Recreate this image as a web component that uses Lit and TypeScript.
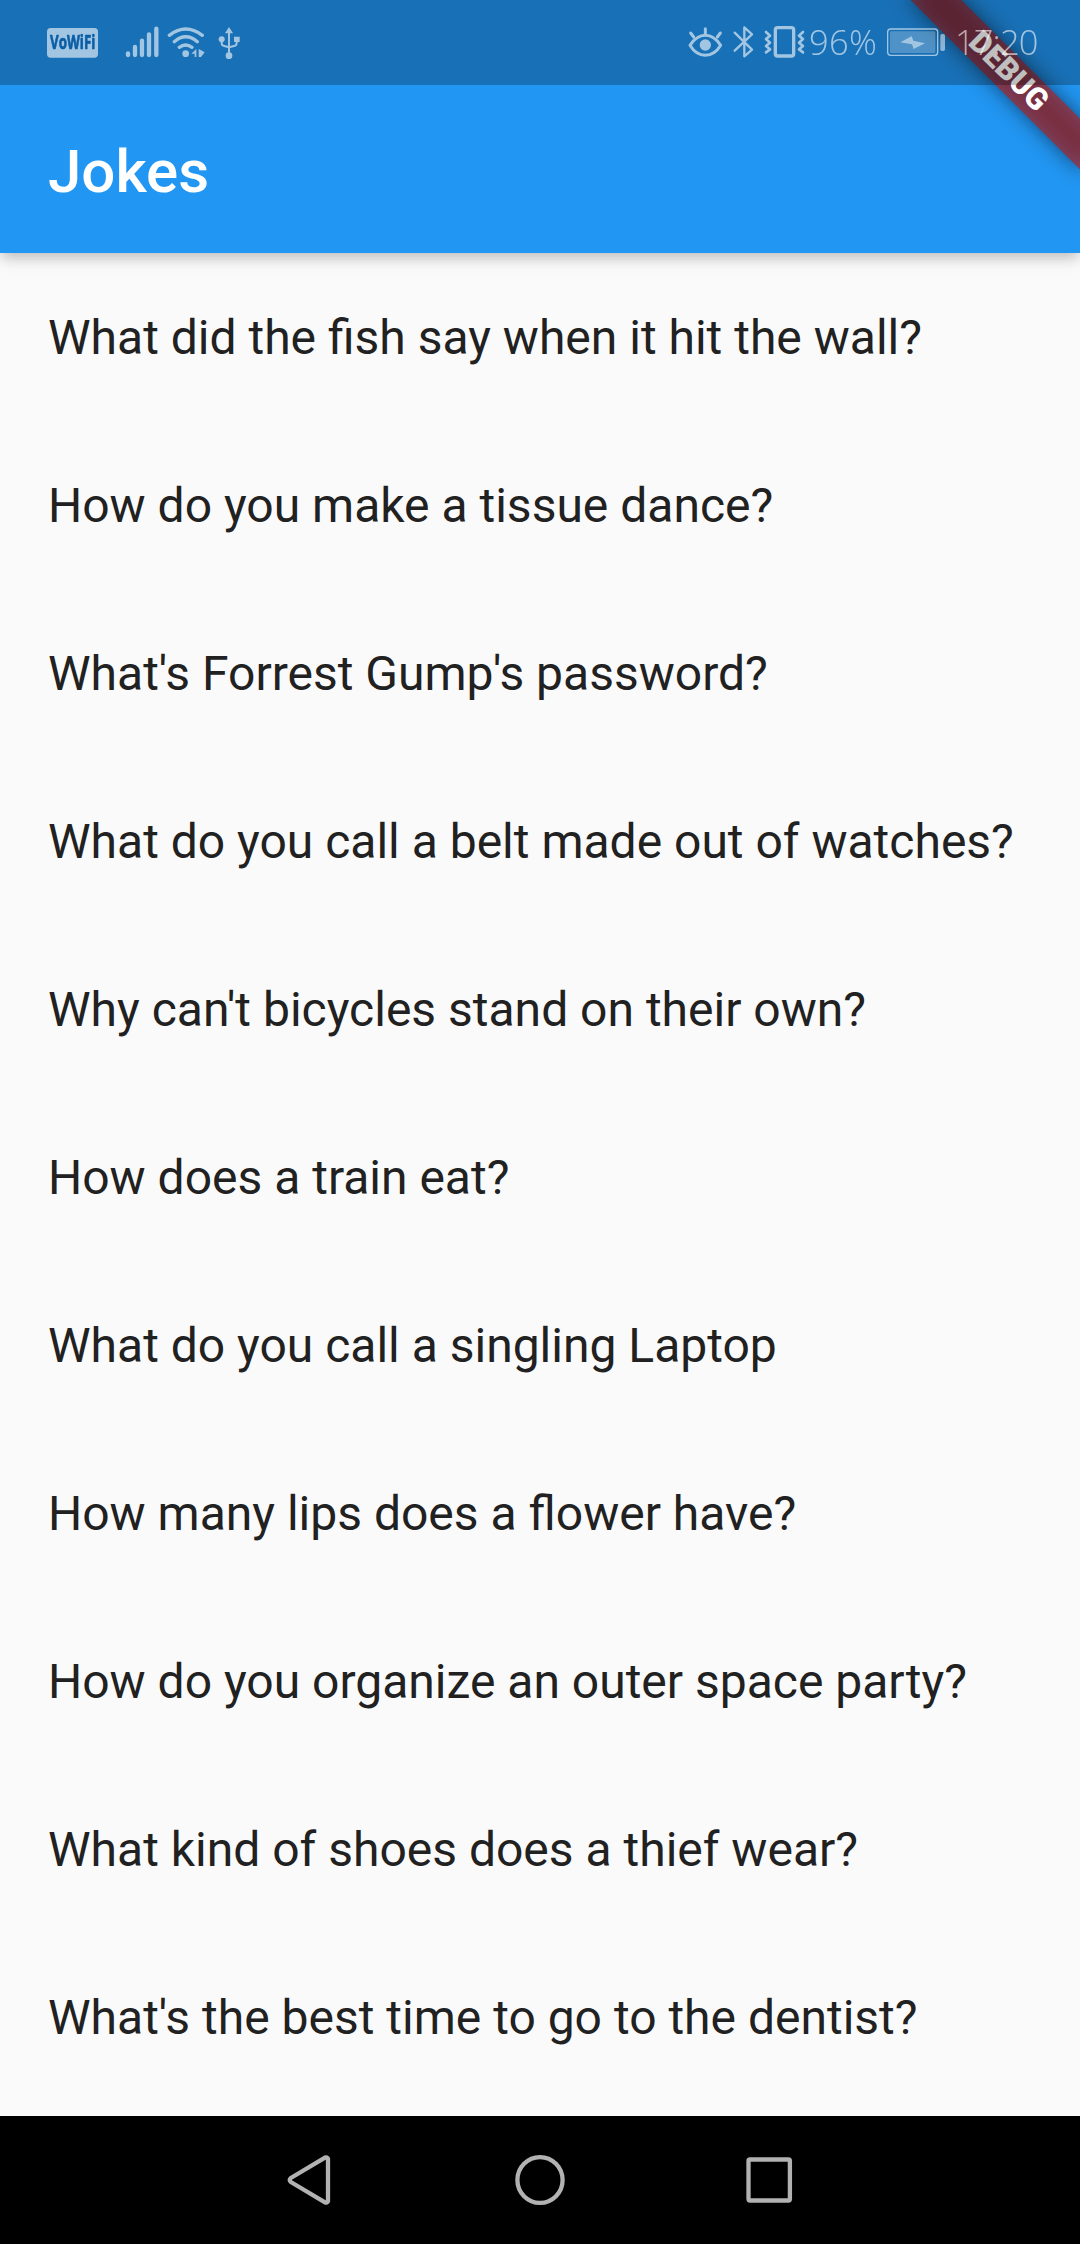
import { LitElement, html, css } from "lit";
import { customElement } from "lit/decorators.js";

@customElement("status-bar")
class StatusBar extends LitElement {
  static styles = css`
    :host {
      display: flex;
      align-items: center;
      justify-content: space-between;
      box-sizing: border-box;
      height: 85px;
      padding: 0 42px 0 47px;
      background: rgba(0, 0, 0, 0.25);
      font: 300 34.5px/83px "Open Sans", sans-serif;
    }
    .group {
      display: flex;
      align-items: center;
      height: 85px;
      opacity: 0.6;
      color: #fff;
    }
    svg {
      display: block;
      height: 37px;
      overflow: visible;
      fill: none;
      stroke: currentColor;
      stroke-linecap: round;
      stroke-linejoin: round;
    }
    .solid {
      fill: currentColor;
      stroke: none;
    }
    .badge { width: 51px; margin-right: 27px; }
    .badge-text {
      fill: #00539c;
      stroke: #00539c;
      stroke-width: 2;
      font: 700 56px "Open Sans", sans-serif;
    }
    .signal { width: 34px; margin-right: 8px; }
    .wifi { width: 38px; margin-right: 13px; }
    .usb { width: 22px; }
    .eye { width: 35px; margin-right: 10px; }
    .bluetooth { width: 21px; margin-right: 10px; }
    .vibrate { width: 41px; margin-right: 4px; }
    .percent,
    .time {
      height: 85px;
      white-space: nowrap;
    }
    .percent { width: 78px; letter-spacing: 0.3px; }
    .battery { width: 58px; margin-right: 10px; }
    .time { width: 83px; letter-spacing: -0.9px; }
  `;

  render() {
    return html`
      <div class="group">
        <svg class="badge" viewBox="51 42 153 111">
          <rect class="solid" x="51" y="54" width="153" height="89" rx="11" />
          <text class="badge-text" x="60" y="118" textLength="136" lengthAdjust="spacingAndGlyphs">VoWiFi</text>
        </svg>
        <svg class="signal" viewBox="285 42 102 111" stroke-width="13">
          <path d="M294 130v5M315 111v24M336 92v43M357 73v62M379 56v79" />
        </svg>
        <svg class="wifi" viewBox="411 42 114 111" stroke-width="10">
          <path d="M418 76Q467 38 517 76M433 95Q467 66 502 95M448 112Q467 98 486 112" />
          <circle class="solid" cx="467" cy="131" r="10" />
          <path class="solid" d="M484 131 499 117V141H494V131ZM506 117 524 127H524L513 141H506Z" />
        </svg>
        <svg class="usb" viewBox="564 42 66 111" stroke-width="6">
          <path d="M597 64V137M575 91V99Q575 107 583 108L597 112L612 108Q620 107 620 99V91" />
          <path class="solid" d="M597 51 609 70H585ZM612 80H629V96H612Z" />
          <circle class="solid" cx="575" cy="88" r="9" />
          <circle class="solid" cx="597" cy="137" r="10" />
        </svg>
      </div>
      <div class="group">
        <svg class="eye" viewBox="54 42 105 111" stroke-width="9">
          <path d="M60 106Q80 76 106 76T152 106Q134 136 106 136T60 106ZM106 56V73M62 69L71 81M151 69L142 81" />
          <circle class="solid" cx="106" cy="105" r="17" />
        </svg>
        <svg class="bluetooth" viewBox="189 42 63 111" stroke-width="7">
          <path d="M194 68 246 119 223 139V52L246 73 194 122" />
        </svg>
        <svg class="vibrate" viewBox="282 42 123 111" stroke-width="8">
          <rect x="316" y="53" width="55" height="85" rx="7" stroke-width="10" />
          <path d="M288 66 300 77 288 87 300 98 288 108 300 118 288 127M399 66 387 77 399 87 387 98 399 108 387 118 399 127" />
        </svg>
        <span class="percent">96%</span>
        <svg class="battery" viewBox="51 72 174 111">
          <rect x="53" y="87" width="150" height="79" rx="9" stroke-width="4" />
          <rect class="solid" x="60" y="94" width="136" height="65" rx="3" opacity="0.4" />
          <rect class="solid" x="211" y="102" width="14" height="51" rx="5" opacity="0.85" />
          <path class="solid" d="M91 127 125 109 130 122 165 130 131 147 126 133Z" />
        </svg>
        <span class="time">17:20</span>
      </div>
    `;
  }
}

@customElement("debug-banner")
class DebugBanner extends LitElement {
  static styles = css`
    :host {
      display: block;
      width: 240px;
      height: 36px;
      transform: rotate(45deg);
    }
    .shadow {
      position: absolute;
      inset: 0;
      background: rgba(0, 0, 0, 0.5);
      filter: blur(10.9px);
    }
    .ribbon {
      position: relative;
      height: 36px;
      background: rgba(183, 28, 28, 0.627);
      color: #fff;
      font: 900 30.6px/33px Roboto, sans-serif;
      text-align: center;
    }
  `;

  render() {
    return html`<div class="shadow"></div><div class="ribbon">DEBUG</div>`;
  }
}

@customElement("nav-bar")
class NavBar extends LitElement {
  static styles = css`
    :host {
      display: flex;
      align-items: center;
      justify-content: center;
      gap: 180px;
      height: 128px;
      background: #000;
    }
    svg {
      display: block;
      width: 50px;
      height: 52px;
      fill: none;
      stroke: #b2b2b2;
      stroke-width: 4.3;
      stroke-linejoin: round;
    }
  `;

  render() {
    return html`
      <svg viewBox="285 2154 50 52"><path d="M328 2158.800V2201.200Q327.200 2203.300 325 2202.400L290.800 2182Q288.600 2180 290.800 2178L325 2157.600Q327.200 2156.700 328 2158.800Z" /></svg>
      <svg viewBox="515 2154 50 52"><ellipse cx="540" cy="2180" rx="22.600" ry="22.900" /></svg>
      <svg viewBox="745 2154 50 52"><rect x="748.500" y="2159.500" width="41.400" height="41" rx="1.500" /></svg>
    `;
  }
}

const JOKES = [
  "What did the fish say when it hit the wall?",
  "How do you make a tissue dance?",
  "What's Forrest Gump's password?",
  "What do you call a belt made out of watches?",
  "Why can't bicycles stand on their own?",
  "How does a train eat?",
  "What do you call a singling Laptop",
  "How many lips does a flower have?",
  "How do you organize an outer space party?",
  "What kind of shoes does a thief wear?",
  "What's the best time to go to the dentist?",
];

@customElement("app-root")
class AppRoot extends LitElement {
  static styles = css`
    :host {
      display: flex;
      flex-direction: column;
      position: relative;
      width: 1080px;
      height: 2244px;
      overflow: hidden;
      background: #fafafa;
      font-family: Roboto, sans-serif;
    }
    .header {
      flex: none;
      background: #2196f3;
      box-shadow: 0 6px 12px -3px rgba(0, 0, 0, 0.16), 0 10px 14px 0 rgba(0, 0, 0, 0.06),
        0 3px 16px 0 rgba(0, 0, 0, 0.06);
    }
    .status {
      position: relative;
      z-index: 2;
    }
    .title {
      margin: 0;
      padding: 0 48px;
      height: 168px;
      color: #fff;
      font-size: 60px;
      font-weight: 500;
      line-height: 173px;
    }
    .list {
      flex: 1;
      min-height: 0;
      margin: 0;
      padding: 0;
      overflow: hidden;
      list-style: none;
    }
    .joke {
      height: 168px;
      padding-left: 48px;
      color: #212121;
      font-size: 48px;
      line-height: 170px;
      white-space: nowrap;
    }
    .nav {
      flex: none;
    }
    .banner {
      position: absolute;
      z-index: 1;
      left: 887.9px;
      top: 54.1px;
    }
  `;

  render() {
    return html`
      <header class="header">
        <status-bar class="status"></status-bar>
        <h1 class="title">Jokes</h1>
      </header>
      <ul class="list">
        ${JOKES.map((joke) => html`<li class="joke">${joke}</li>`)}
      </ul>
      <nav-bar class="nav"></nav-bar>
      <debug-banner class="banner"></debug-banner>
    `;
  }
}
